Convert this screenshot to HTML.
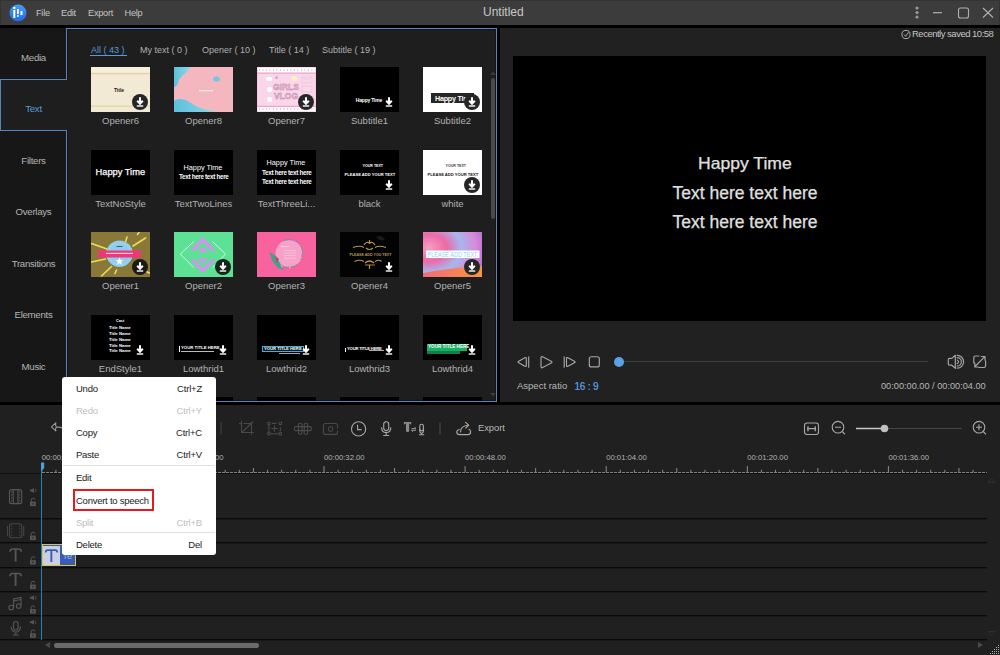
<!DOCTYPE html>
<html><head><meta charset="utf-8">
<style>
*{margin:0;padding:0;box-sizing:border-box}
html,body{width:1000px;height:655px;overflow:hidden;background:#000;font-family:"Liberation Sans",sans-serif}
.a{position:absolute}
.t{position:absolute;white-space:nowrap;line-height:1}
#title{left:0;top:0;width:1000px;height:25px;background:#3c3c3c;border-top:1px solid #333;border-left:1px solid #333;border-right:1px solid #333}
#side{left:0;top:28px;width:67px;height:374px;background:#171717}
#panel{left:66px;top:28px;width:431px;height:374px;background:#1e1e1e;border:1px solid #5088bd;box-shadow:inset 0 0 0 1px #1a1212}
#tabText{left:0;top:79px;width:67px;height:52px;background:#1e1e1e;border:1px solid #5088bd;border-right:none}
#right{left:500px;top:28px;width:500px;height:374px;background:#212121}
#video{left:513px;top:56px;width:473px;height:265px;background:#000}
#tl{left:0;top:405px;width:1000px;height:250px;background:#202020}
.sl{color:#b4b4b4;font-size:9.7px;letter-spacing:-0.3px;width:67px;text-align:center;left:0}
.lab{color:#b2b2b2;font-size:9.5px;text-align:center;width:80px}
.th{position:absolute;width:59px;height:45px;overflow:hidden;background:#000}
.dl{position:absolute;width:16px;height:16px;border-radius:50%;background:#2a2a2a}
.mi{left:76px;font-size:9.5px;color:#1a1a1a;letter-spacing:-0.25px}
.ms{right:798px;font-size:9.5px;color:#1a1a1a;letter-spacing:-0.2px}
.sep{position:absolute;left:0;width:987px;height:2px;background:linear-gradient(#0a0a0a 50%,#171717 50%)}
</style></head><body>
<!-- title bar -->
<div id="title" class="a"></div>
<svg class="a" style="left:9px;top:4px" width="18" height="18" viewBox="0 0 18 18">
<defs><linearGradient id="lg" x1="0" y1="0" x2="0" y2="1"><stop offset="0" stop-color="#4a9df5"/><stop offset="1" stop-color="#1f6be6"/></linearGradient></defs>
<circle cx="9" cy="9" r="8.5" fill="url(#lg)"/>
<rect x="4.3" y="3" width="2" height="2" fill="#fff"/>
<rect x="4.3" y="6" width="2" height="8" fill="#fff"/>
<rect x="8" y="5" width="1.8" height="5" fill="#fff"/>
<rect x="8" y="11" width="1.8" height="1.8" fill="#fff"/>
<rect x="11.5" y="7" width="2" height="4" fill="#fff"/>
</svg>
<div class="t" style="left:36px;top:9px;font-size:9.2px;color:#c4c4c4;letter-spacing:-0.25px">File</div>
<div class="t" style="left:61px;top:9px;font-size:9.2px;color:#c4c4c4;letter-spacing:-0.25px">Edit</div>
<div class="t" style="left:88px;top:9px;font-size:9.2px;color:#c4c4c4;letter-spacing:-0.25px">Export</div>
<div class="t" style="left:124.5px;top:9px;font-size:9.2px;color:#c4c4c4;letter-spacing:-0.25px">Help</div>
<div class="t" style="left:483px;top:6px;font-size:12px;color:#c8c8c8">Untitled</div>
<svg class="a" style="left:905px;top:0" width="95" height="25">
<circle cx="12" cy="8" r="1.6" fill="#9a9a9a"/><circle cx="12" cy="12.5" r="1.6" fill="#9a9a9a"/><circle cx="12" cy="17" r="1.6" fill="#9a9a9a"/>
<line x1="28" y1="12.7" x2="37" y2="12.7" stroke="#b0b0b0" stroke-width="1.2"/>
<rect x="53.5" y="8" width="10" height="10" rx="2" fill="none" stroke="#b0b0b0" stroke-width="1.1"/>
<path d="M78 8 L88 17.5 M88 8 L78 17.5" stroke="#b0b0b0" stroke-width="1.1"/>
</svg>

<!-- left area -->
<div id="side" class="a"></div>
<div id="panel" class="a"></div>
<div id="tabText" class="a"></div>
<div class="a" style="left:67px;top:80px;width:1px;height:50px;background:#1e1e1e"></div>
<div class="t sl" style="top:53px">Media</div>
<div class="t sl" style="top:104px;color:#5a9ad8">Text</div>
<div class="t sl" style="top:156px">Filters</div>
<div class="t sl" style="top:207px">Overlays</div>
<div class="t sl" style="top:259px">Transitions</div>
<div class="t sl" style="top:310px">Elements</div>
<div class="t sl" style="top:362px">Music</div>

<!-- category tabs -->
<div class="t" style="left:91px;top:46px;font-size:9px;color:#5a9ad8">All ( 43 )</div>
<div class="a" style="left:90px;top:55px;width:37px;height:1px;background:#5a9ad8"></div>
<div class="t" style="left:140px;top:46px;font-size:9px;color:#b0b0b0">My text ( 0 )</div>
<div class="t" style="left:202px;top:46px;font-size:9px;color:#b0b0b0">Opener ( 10 )</div>
<div class="t" style="left:269px;top:46px;font-size:9px;color:#b0b0b0">Title ( 14 )</div>
<div class="t" style="left:322px;top:46px;font-size:9px;color:#b0b0b0">Subtitle ( 19 )</div>

<!-- scrollbar -->
<div class="a" style="left:491px;top:78px;width:4px;height:141px;background:#4a4a4a;border-radius:2px"></div>

<div class="th" style="left:91px;top:67px;background:#f3ead6"><svg width="59" height="45" viewBox="0 0 59 45" style="position:absolute;left:0;top:0"><rect width="59" height="45" fill="#f3ead6"/><rect y="6" width="59" height="1.3" fill="#e4d3a4"/><rect y="38.5" width="59" height="1.3" fill="#e4d3a4"/><rect y="0" width="59" height="5" fill="#f6efdc"/><text x="28" y="25" font-size="5" font-weight="bold" fill="#222" text-anchor="middle" style="font-family:'Liberation Sans',sans-serif;">Title</text></svg></div>
<svg class="a" style="left:131.3px;top:92.5px" width="18" height="18" viewBox="0 0 18 18"><circle cx="9" cy="9" r="8" fill="#262626"/><path d="M9 4.3 V10.5 M6.2 7.8 L9 10.8 L11.8 7.8" stroke="#fff" stroke-width="2" fill="none"/><rect x="5.8" y="12.3" width="6.4" height="1.4" fill="#fff"/></svg>
<div class="t lab" style="left:80.5px;top:116px">Opener6</div>
<div class="th" style="left:174px;top:67px;background:#f4b7c0"><svg width="59" height="45" viewBox="0 0 59 45" style="position:absolute;left:0;top:0"><rect width="59" height="45" fill="#f4b7c0"/><defs><linearGradient id="cy8" x1="0" y1="0" x2="1" y2="0"><stop offset="0" stop-color="#5cc0da"/><stop offset="1" stop-color="#8fd8ea"/></linearGradient></defs><path d="M0 0 H16.3 C15 3 12 6 8 9 C5 11.5 4.5 14 4 16.5 C3.5 18.5 1.5 19.7 0 20.2 Z" fill="url(#cy8)"/><path d="M0 45 V33.7 C3 32 7 31.5 10 32.5 C14 33.5 17 36 20 38 C24 40.5 29 42 34 43 C38 44 41 44.5 43 45 Z" fill="url(#cy8)"/><ellipse cx="42.5" cy="12" rx="3.4" ry="2.6" fill="#6ccbe0"/><rect x="25" y="23.2" width="14" height="1.1" fill="#fff" opacity="0.75"/></svg></div>
<div class="t lab" style="left:163.5px;top:116px">Opener8</div>
<div class="th" style="left:257px;top:67px;background:#f9d6ea"><svg width="59" height="45" viewBox="0 0 59 45" style="position:absolute;left:0;top:0"><rect width="59" height="45" fill="#fff"/><rect x="0" y="6" width="59" height="33.5" fill="#f9d6ea"/><rect x="0" y="5.5" width="59" height="1.2" fill="#eaa2c8"/><rect x="0" y="38.8" width="59" height="1.2" fill="#eaa2c8"/><rect x="0" y="0" width="59" height="45" fill="none" stroke="#f0b8d6" stroke-width="1"/><rect x="2.0" y="2" width="0.8" height="2" fill="#e8b0d0"/><rect x="2.0" y="41" width="0.8" height="2" fill="#e8b0d0"/><rect x="5.5" y="2" width="0.8" height="2" fill="#e8b0d0"/><rect x="5.5" y="41" width="0.8" height="2" fill="#e8b0d0"/><rect x="9.0" y="2" width="0.8" height="2" fill="#e8b0d0"/><rect x="9.0" y="41" width="0.8" height="2" fill="#e8b0d0"/><rect x="12.5" y="2" width="0.8" height="2" fill="#e8b0d0"/><rect x="12.5" y="41" width="0.8" height="2" fill="#e8b0d0"/><rect x="16.0" y="2" width="0.8" height="2" fill="#e8b0d0"/><rect x="16.0" y="41" width="0.8" height="2" fill="#e8b0d0"/><rect x="19.5" y="2" width="0.8" height="2" fill="#e8b0d0"/><rect x="19.5" y="41" width="0.8" height="2" fill="#e8b0d0"/><rect x="23.0" y="2" width="0.8" height="2" fill="#e8b0d0"/><rect x="23.0" y="41" width="0.8" height="2" fill="#e8b0d0"/><rect x="26.5" y="2" width="0.8" height="2" fill="#e8b0d0"/><rect x="26.5" y="41" width="0.8" height="2" fill="#e8b0d0"/><rect x="30.0" y="2" width="0.8" height="2" fill="#e8b0d0"/><rect x="30.0" y="41" width="0.8" height="2" fill="#e8b0d0"/><rect x="33.5" y="2" width="0.8" height="2" fill="#e8b0d0"/><rect x="33.5" y="41" width="0.8" height="2" fill="#e8b0d0"/><rect x="37.0" y="2" width="0.8" height="2" fill="#e8b0d0"/><rect x="37.0" y="41" width="0.8" height="2" fill="#e8b0d0"/><rect x="40.5" y="2" width="0.8" height="2" fill="#e8b0d0"/><rect x="40.5" y="41" width="0.8" height="2" fill="#e8b0d0"/><rect x="44.0" y="2" width="0.8" height="2" fill="#e8b0d0"/><rect x="44.0" y="41" width="0.8" height="2" fill="#e8b0d0"/><rect x="47.5" y="2" width="0.8" height="2" fill="#e8b0d0"/><rect x="47.5" y="41" width="0.8" height="2" fill="#e8b0d0"/><rect x="51.0" y="2" width="0.8" height="2" fill="#e8b0d0"/><rect x="51.0" y="41" width="0.8" height="2" fill="#e8b0d0"/><rect x="54.5" y="2" width="0.8" height="2" fill="#e8b0d0"/><rect x="54.5" y="41" width="0.8" height="2" fill="#e8b0d0"/><text x="29" y="22.5" font-size="8.5" font-weight="bold" fill="#f2b8d6" stroke="#b88aa4" stroke-width="0.4" text-anchor="middle" style="font-family:'Liberation Sans',sans-serif;">GIRLS</text><text x="29" y="31.5" font-size="8.5" font-weight="bold" fill="#f2b8d6" stroke="#b88aa4" stroke-width="0.4" text-anchor="middle" style="font-family:'Liberation Sans',sans-serif;">VLOG</text><ellipse cx="12" cy="12" rx="3.2" ry="2" fill="#fff"/><circle cx="12.5" cy="22.5" r="2.6" fill="#fff"/><circle cx="12.5" cy="32.5" r="2.6" fill="#fff"/><rect x="34.5" y="9.5" width="5.5" height="4.5" rx="1" fill="#fbf2c0"/><path d="M45 10 H55 V16 H45Z M45 10 L50 13 L55 10 M45 19 H55 V25 H45Z" fill="none" stroke="#eebcd8" stroke-width="0.6"/><circle cx="19.5" cy="10.5" r="1.5" fill="#e4a0c4"/></svg></div>
<svg class="a" style="left:297.3px;top:92.5px" width="18" height="18" viewBox="0 0 18 18"><circle cx="9" cy="9" r="8" fill="#262626"/><path d="M9 4.3 V10.5 M6.2 7.8 L9 10.8 L11.8 7.8" stroke="#fff" stroke-width="2" fill="none"/><rect x="5.8" y="12.3" width="6.4" height="1.4" fill="#fff"/></svg>
<div class="t lab" style="left:246.5px;top:116px">Opener7</div>
<div class="th" style="left:340px;top:67px;background:#000"><div class="t" style="left:15.8px;top:30.8px;font-size:5px;color:#fff;font-weight:bold;letter-spacing:-0.2px">Happy Time</div></div>
<svg class="a" style="left:380.3px;top:92.5px" width="18" height="18" viewBox="0 0 18 18"><path d="M9 4.3 V10.5 M6.2 7.8 L9 10.8 L11.8 7.8" stroke="#fff" stroke-width="2" fill="none"/><rect x="5.8" y="12.3" width="6.4" height="1.4" fill="#fff"/></svg>
<div class="t lab" style="left:329.5px;top:116px">Subtitle1</div>
<div class="th" style="left:423px;top:67px;background:#fff"><div class="a" style="left:7.8px;top:26px;width:43.5px;height:10px;background:#262626"></div><div class="t" style="left:12px;top:28.3px;font-size:7.2px;color:#fff;font-weight:bold;letter-spacing:-0.25px">Happy Tim</div></div>
<svg class="a" style="left:463.3px;top:92.5px" width="18" height="18" viewBox="0 0 18 18"><circle cx="9" cy="9" r="8" fill="#262626"/><path d="M9 4.3 V10.5 M6.2 7.8 L9 10.8 L11.8 7.8" stroke="#fff" stroke-width="2" fill="none"/><rect x="5.8" y="12.3" width="6.4" height="1.4" fill="#fff"/></svg>
<div class="t lab" style="left:412.5px;top:116px">Subtitle2</div>
<div class="th" style="left:91px;top:150px;background:#000"><div class="t" style="left:4.5px;top:17.5px;font-size:9.3px;color:#fff;-webkit-text-stroke:0.25px #fff">Happy Time</div></div>
<div class="t lab" style="left:80.5px;top:199px">TextNoStyle</div>
<div class="th" style="left:174px;top:150px;background:#000"><div class="t" style="left:9.5px;top:13.8px;font-size:7.3px;color:#fff;">Happy Time</div><div class="t" style="left:5px;top:24px;font-size:6.3px;color:#fff;font-weight:bold;letter-spacing:-0.32px">Text here text here</div></div>
<div class="t lab" style="left:163.5px;top:199px">TextTwoLines</div>
<div class="th" style="left:257px;top:150px;background:#000"><div class="t" style="left:9.5px;top:9px;font-size:7.3px;color:#fff;">Happy Time</div><div class="t" style="left:5px;top:20.3px;font-size:6.3px;color:#fff;font-weight:bold;letter-spacing:-0.32px">Text here text here</div><div class="t" style="left:5px;top:28.5px;font-size:6.3px;color:#fff;font-weight:bold;letter-spacing:-0.32px">Text here text here</div></div>
<div class="t lab" style="left:246.5px;top:199px">TextThreeLi...</div>
<div class="th" style="left:340px;top:150px;background:#000"><div class="t" style="left:22.5px;top:15px;font-size:3.6px;color:#fff;font-weight:bold">YOUR TEXT</div><div class="t" style="left:4.5px;top:22.5px;font-size:4.1px;color:#fff;font-weight:bold">PLEASE ADD YOUR TEXT</div></div>
<svg class="a" style="left:380.3px;top:175.5px" width="18" height="18" viewBox="0 0 18 18"><path d="M9 4.3 V10.5 M6.2 7.8 L9 10.8 L11.8 7.8" stroke="#fff" stroke-width="2" fill="none"/><rect x="5.8" y="12.3" width="6.4" height="1.4" fill="#fff"/></svg>
<div class="t lab" style="left:329.5px;top:199px">black</div>
<div class="th" style="left:423px;top:150px;background:#fff"><div class="t" style="left:22.5px;top:15px;font-size:3.6px;color:#444;font-weight:bold">YOUR TEXT</div><div class="t" style="left:4.5px;top:22.5px;font-size:4.1px;color:#111;font-weight:bold">PLEASE ADD YOUR TEXT</div></div>
<svg class="a" style="left:463.3px;top:175.5px" width="18" height="18" viewBox="0 0 18 18"><circle cx="9" cy="9" r="8" fill="#262626"/><path d="M9 4.3 V10.5 M6.2 7.8 L9 10.8 L11.8 7.8" stroke="#fff" stroke-width="2" fill="none"/><rect x="5.8" y="12.3" width="6.4" height="1.4" fill="#fff"/></svg>
<div class="t lab" style="left:412.5px;top:199px">white</div>
<div class="th" style="left:91px;top:232px;background:#8a7838"><svg width="59" height="45" viewBox="0 0 59 45" style="position:absolute;left:0;top:0"><rect width="59" height="45" fill="#8a7838"/><g stroke="#eedd5a" stroke-width="1.6" stroke-linecap="round"><path d="M0.5 11.5 L16 17 M0.5 30 L14.5 27 M10.5 44 L20.5 34.5 M24 41.5 L25.5 38 M34.5 10 L36 5 M46.5 2.5 L48 0.5 M42 14 L54.5 6 M43.5 34 L58.5 41"/></g><circle cx="28.5" cy="21.7" r="13.3" fill="#8fcdeb"/><circle cx="28.5" cy="21.7" r="11" fill="none" stroke="#e8f6fc" stroke-width="0.5" stroke-dasharray="0.8 1"/><path d="M5.5 18.5 H51.5 L49 22 L51.5 25.5 H5.5 L8 22Z" fill="#f0367a"/><rect x="15" y="20.8" width="27" height="1.2" fill="#ffd0e0"/><path d="M28.5 25.5 L29.6 28.2 L32.5 28.3 L30.2 30 L31 32.8 L28.5 31.2 L26 32.8 L26.8 30 L24.5 28.3 L27.4 28.2Z" fill="#fff"/><rect x="25.5" y="14" width="6" height="1" fill="#557"/></svg></div>
<svg class="a" style="left:131.3px;top:257.5px" width="18" height="18" viewBox="0 0 18 18"><circle cx="9" cy="9" r="8" fill="#1c1a12"/><path d="M9 4.3 V10.5 M6.2 7.8 L9 10.8 L11.8 7.8" stroke="#fff" stroke-width="2" fill="none"/><rect x="5.8" y="12.3" width="6.4" height="1.4" fill="#fff"/></svg>
<div class="t lab" style="left:80.5px;top:281px">Opener1</div>
<div class="th" style="left:174px;top:232px;background:#5de195"><svg width="59" height="45" viewBox="0 0 59 45" style="position:absolute;left:0;top:0"><rect width="59" height="45" fill="#5de195"/><path d="M19.8 9.5 L6.3 22 L19.8 35.7 M38.5 9.5 L51.5 22 L38.5 35.7" fill="none" stroke="#e8fbf0" stroke-width="0.8"/><path d="M28.8 4.5 L42 18.8 H36.8 L28.8 10.2 L20.8 18.8 H15.6Z" fill="#c99ae8"/><path d="M28.8 14 L34 20.2 H23.6Z" fill="#c99ae8"/><path d="M23.6 26.2 H34 L28.8 32.4Z" fill="#c99ae8"/><path d="M15.6 27.5 H20.8 L28.8 36 L36.8 27.5 H42 L28.8 41.5Z" fill="#c99ae8"/></svg></div>
<svg class="a" style="left:214.3px;top:257.5px" width="18" height="18" viewBox="0 0 18 18"><circle cx="9" cy="9" r="8" fill="#14251b"/><path d="M9 4.3 V10.5 M6.2 7.8 L9 10.8 L11.8 7.8" stroke="#fff" stroke-width="2" fill="none"/><rect x="5.8" y="12.3" width="6.4" height="1.4" fill="#fff"/></svg>
<div class="t lab" style="left:163.5px;top:281px">Opener2</div>
<div class="th" style="left:257px;top:232px;background:#f8629e"><svg width="59" height="45" viewBox="0 0 59 45" style="position:absolute;left:0;top:0"><rect width="59" height="45" fill="#f8629e"/><circle cx="32" cy="21.5" r="13.5" fill="#f7a2c8"/><path d="M27 8.5 Q36 6 42 11 M44 14 Q47 20 44 28 M40 33 Q34 36 27 35" fill="none" stroke="#4aa28c" stroke-width="1.2" stroke-dasharray="1.5 1"/><circle cx="38" cy="9" r="1" fill="#f5f"/><circle cx="45" cy="24" r="1" fill="#e6c"/><circle cx="33" cy="35.5" r="1" fill="#f9c"/><path d="M12 20 L19 24 L24 33 L27 38 L21 36 L16 30 Z" fill="#3ea58a"/><path d="M18 24 L22 27 L20 31Z" fill="#d83a6c"/><path d="M23 28 L26 36 L24 35Z" fill="#c7a0e0"/><rect x="24" y="14" width="8" height="0.8" fill="#fde" opacity="0.8"/><rect x="27" y="18.0" width="12" height="0.7" fill="#fde" opacity="0.7"/><rect x="27" y="20.6" width="12" height="0.7" fill="#fde" opacity="0.7"/><rect x="27" y="23.2" width="12" height="0.7" fill="#fde" opacity="0.7"/><rect x="27" y="25.8" width="12" height="0.7" fill="#fde" opacity="0.7"/></svg></div>
<div class="t lab" style="left:246.5px;top:281px">Opener3</div>
<div class="th" style="left:340px;top:232px;background:#030303"><svg width="59" height="45" viewBox="0 0 59 45" style="position:absolute;left:0;top:0"><rect width="59" height="45" fill="#030303"/><path d="M36 5 Q42 2 45 8 Q40 10 36 5Z" fill="#1a1a1a"/><g fill="none" stroke="#b8944c" stroke-width="1.2"><path d="M13 15.5 Q20 13 24 15.5 M35 15.5 Q39 13 46 15.5 M24 13 Q26.5 9 29.5 11 Q32.5 9 35 13 M26 16 Q29.5 19 33 16 M29.5 8 V12"/><path d="M14.5 29.5 Q20 27 24 29.5 M35 29.5 Q39 27 41.5 29.5 M25 31 Q29.5 27 34 31 M29.5 33 V37"/></g><text x="30.5" y="24" font-size="3.6" font-weight="bold" fill="#b99550" text-anchor="middle" style="font-family:'Liberation Sans',sans-serif;">PLEASE ADD YOU TEXT</text><rect x="25" y="32.5" width="10" height="1" fill="#a88645"/></svg></div>
<svg class="a" style="left:380.3px;top:257.5px" width="18" height="18" viewBox="0 0 18 18"><path d="M9 4.3 V10.5 M6.2 7.8 L9 10.8 L11.8 7.8" stroke="#fff" stroke-width="2" fill="none"/><rect x="5.8" y="12.3" width="6.4" height="1.4" fill="#fff"/></svg>
<div class="t lab" style="left:329.5px;top:281px">Opener4</div>
<div class="th" style="left:423px;top:232px;background:#e88ac8"><svg width="59" height="45" viewBox="0 0 59 45" style="position:absolute;left:0;top:0"><defs><radialGradient id="g5" cx="0.1" cy="0.35" r="1"><stop offset="0" stop-color="#f5a0c0"/><stop offset="0.3" stop-color="#ec6aa6"/><stop offset="0.55" stop-color="#a8b6ee"/><stop offset="0.8" stop-color="#d88ad6"/><stop offset="1" stop-color="#b06ad8"/></radialGradient><linearGradient id="g5b" x1="0" y1="0" x2="1" y2="0"><stop offset="0" stop-color="#f06a7a"/><stop offset="1" stop-color="#f8963c"/></linearGradient></defs><rect width="59" height="45" fill="url(#g5)"/><path d="M0 41 Q25 36 59 34 V45 H0Z" fill="url(#g5b)"/><rect x="3" y="18.5" width="53.5" height="7.5" fill="#fff"/><text x="4.5" y="25" font-size="6.8" fill="#8fd6f2" style="font-family:'Liberation Sans',sans-serif;" textLength="50" lengthAdjust="spacingAndGlyphs">PLEASE ADD TEXT</text></svg></div>
<svg class="a" style="left:463.3px;top:257.5px" width="18" height="18" viewBox="0 0 18 18"><circle cx="9" cy="9" r="8" fill="#262626"/><path d="M9 4.3 V10.5 M6.2 7.8 L9 10.8 L11.8 7.8" stroke="#fff" stroke-width="2" fill="none"/><rect x="5.8" y="12.3" width="6.4" height="1.4" fill="#fff"/></svg>
<div class="t lab" style="left:412.5px;top:281px">Opener5</div>
<div class="th" style="left:91px;top:315px;background:#000"><div class="t" style="left:25px;top:5px;font-size:3.8px;color:#fff;font-weight:bold">Cast</div><div class="t" style="left:18px;top:11.0px;font-size:4.4px;color:#fff;font-weight:bold;letter-spacing:-0.05px">Title <b>Name</b></div><div class="t" style="left:18px;top:16.85px;font-size:4.4px;color:#fff;font-weight:bold;letter-spacing:-0.05px">Title <b>Name</b></div><div class="t" style="left:18px;top:22.7px;font-size:4.4px;color:#fff;font-weight:bold;letter-spacing:-0.05px">Title <b>Name</b></div><div class="t" style="left:18px;top:28.549999999999997px;font-size:4.4px;color:#fff;font-weight:bold;letter-spacing:-0.05px">Title <b>Name</b></div><div class="t" style="left:18px;top:34.4px;font-size:4.4px;color:#fff;font-weight:bold;letter-spacing:-0.05px">Title <b>Name</b></div></div>
<svg class="a" style="left:131.3px;top:340.5px" width="18" height="18" viewBox="0 0 18 18"><path d="M9 4.3 V10.5 M6.2 7.8 L9 10.8 L11.8 7.8" stroke="#fff" stroke-width="2" fill="none"/><rect x="5.8" y="12.3" width="6.4" height="1.4" fill="#fff"/></svg>
<div class="t lab" style="left:80.5px;top:364px">EndStyle1</div>
<div class="th" style="left:174px;top:315px;background:#000"><div class="a" style="left:5px;top:31px;width:0.8px;height:6px;background:#fff"></div><div class="t" style="left:7px;top:30.8px;font-size:4.3px;color:#fff;font-weight:bold">YOUR TITLE HERE</div><div class="a" style="left:7px;top:35.8px;width:33px;height:1px;background:#bbb"></div></div>
<svg class="a" style="left:214.3px;top:340.5px" width="18" height="18" viewBox="0 0 18 18"><path d="M9 4.3 V10.5 M6.2 7.8 L9 10.8 L11.8 7.8" stroke="#fff" stroke-width="2" fill="none"/><rect x="5.8" y="12.3" width="6.4" height="1.4" fill="#fff"/></svg>
<div class="t lab" style="left:163.5px;top:364px">Lowthrid1</div>
<div class="th" style="left:257px;top:315px;background:#000"><div class="a" style="left:5px;top:30.5px;width:42px;height:6.5px;border:0.8px solid #38b4e0;background:#101418"></div><div class="t" style="left:7px;top:31.5px;font-size:4.2px;color:#fff;font-weight:bold">YOUR TITLE HERE</div><div class="a" style="left:22px;top:38.3px;width:21px;height:1px;background:#9ab"></div></div>
<svg class="a" style="left:297.3px;top:340.5px" width="18" height="18" viewBox="0 0 18 18"><path d="M9 4.3 V10.5 M6.2 7.8 L9 10.8 L11.8 7.8" stroke="#fff" stroke-width="2" fill="none"/><rect x="5.8" y="12.3" width="6.4" height="1.4" fill="#fff"/></svg>
<div class="t lab" style="left:246.5px;top:364px">Lowthrid2</div>
<div class="th" style="left:340px;top:315px;background:#000"><div class="a" style="left:5px;top:32.5px;width:1px;height:4px;background:#fff"></div><div class="t" style="left:7px;top:32.3px;font-size:4.2px;color:#fff;font-weight:bold;letter-spacing:-0.2px">YOUR TITLE HERE</div><div class="a" style="left:29px;top:34.8px;width:15px;height:1px;background:#aaa"></div></div>
<svg class="a" style="left:380.3px;top:340.5px" width="18" height="18" viewBox="0 0 18 18"><path d="M9 4.3 V10.5 M6.2 7.8 L9 10.8 L11.8 7.8" stroke="#fff" stroke-width="2" fill="none"/><rect x="5.8" y="12.3" width="6.4" height="1.4" fill="#fff"/></svg>
<div class="t lab" style="left:329.5px;top:364px">Lowthrid3</div>
<div class="th" style="left:423px;top:315px;background:#000"><div class="a" style="left:3.5px;top:28.5px;width:40px;height:7px;background:#19b064"></div><div class="t" style="left:5px;top:29.6px;font-size:4.6px;color:#fff;font-weight:bold">YOUR TITLE HERE</div><div class="a" style="left:3.5px;top:35.5px;width:33px;height:3px;background:#0f8048"></div></div>
<svg class="a" style="left:463.3px;top:340.5px" width="18" height="18" viewBox="0 0 18 18"><path d="M9 4.3 V10.5 M6.2 7.8 L9 10.8 L11.8 7.8" stroke="#fff" stroke-width="2" fill="none"/><rect x="5.8" y="12.3" width="6.4" height="1.4" fill="#fff"/></svg>
<div class="t lab" style="left:412.5px;top:364px">Lowthrid4</div>
<div class="th" style="left:91px;top:397px;height:4px;background:#000"></div>
<div class="th" style="left:174px;top:397px;height:4px;background:#000"></div>
<div class="th" style="left:257px;top:397px;height:4px;background:#000"></div>
<div class="th" style="left:340px;top:397px;height:4px;background:#000"></div>
<div class="th" style="left:423px;top:397px;height:4px;background:#000"></div>

<!-- right panel -->
<div id="right" class="a"></div>
<div id="video" class="a"></div>
<svg class="a" style="left:901px;top:29px" width="11" height="11"><circle cx="5" cy="5.5" r="4.1" fill="none" stroke="#bdbdbd" stroke-width="0.9"/><path d="M3 5.6 L4.6 7.3 L7.6 3.2" fill="none" stroke="#bdbdbd" stroke-width="0.9"/></svg>
<div class="t" style="left:912px;top:29px;font-size:9.5px;color:#c4c4c4;letter-spacing:-0.5px">Recently saved 10:58</div>
<div class="t" style="left:698px;top:155px;font-size:16.5px;color:#e0e0e0;-webkit-text-stroke:0.25px #e0e0e0;transform:scaleX(1.065);transform-origin:0 0">Happy Time</div>
<div class="t" style="left:672.5px;top:184.8px;font-size:17.5px;color:#e0e0e0;-webkit-text-stroke:0.25px #e0e0e0">Text here text here</div>
<div class="t" style="left:672.5px;top:214.3px;font-size:17.5px;color:#e0e0e0;-webkit-text-stroke:0.25px #e0e0e0">Text here text here</div>


<!-- player controls -->
<svg class="a" style="left:510px;top:350px" width="100" height="24" viewBox="510 350 100 24">
<g fill="none" stroke="#a6a6a6" stroke-width="1.15" stroke-linejoin="round" stroke-linecap="round">
<path d="M524.90 357.78 L518.70 361.22 Q517.30 362.00 518.70 362.78 L524.90 366.22 Q526.30 367.00 526.30 365.40 L526.30 358.60 Q526.30 357.00 524.90 357.78 Z"/><line x1="528.7" y1="356.8" x2="528.7" y2="367.2"/>
<path d="M542.59 356.84 L551.21 361.36 Q552.80 362.20 551.21 363.04 L542.59 367.56 Q541.00 368.40 541.00 366.60 L541.00 357.80 Q541.00 356.00 542.59 356.84 Z"/>
<line x1="564.2" y1="356.8" x2="564.2" y2="367.2"/><path d="M567.91 357.76 L574.39 361.24 Q575.80 362.00 574.39 362.76 L567.91 366.24 Q566.50 367.00 566.50 365.40 L566.50 358.60 Q566.50 357.00 567.91 357.76 Z"/>
<rect x="589.3" y="356.7" width="10" height="10.2" rx="2"/>
</g></svg>
<div class="a" style="left:624px;top:361px;width:304px;height:1px;background:#3f3f3f"></div>
<div class="a" style="left:614px;top:357px;width:10px;height:10px;border-radius:50%;background:#5aa2e6"></div>
<svg class="a" style="left:940px;top:350px" width="55" height="25" viewBox="940 350 55 25">
<g fill="none" stroke="#a4a4a4" stroke-width="1.2" stroke-linejoin="round" stroke-linecap="round">
<path d="M955.3 355.3 L951.8 358.4 H949.5 Q948.3 358.4 948.3 359.6 V364 Q948.3 365.2 949.5 365.2 H951.8 L955.3 368.3 Z"/>
<path d="M957.2 360 A1.9 1.9 0 0 1 957.2 363.6 M957.2 357.6 A4.2 4.2 0 0 1 957.2 366 M957.2 355.4 A6.4 6.4 0 0 1 957.2 368.2"/>
<path d="M979 356 H975.5 Q973.8 356 973.8 357.7 V363 M985.6 361 V365.8 Q985.6 367.5 983.9 367.5 H979 M975 366.5 L984.8 356.7 M981.3 356.5 H985 V360.2 M974.8 363 V367 H978.5"/>
</g></svg>
<div class="t" style="left:517px;top:381px;font-size:9.5px;color:#b8b8b8">Aspect ratio</div>
<div class="t" style="left:574.5px;top:382px;font-size:10px;color:#5aa2e6;letter-spacing:-0.2px;-webkit-text-stroke:0.2px #5aa2e6">16 : 9</div>
<div class="t" style="left:881px;top:382px;font-size:9.2px;color:#b8b8b8">00:00:00.00 / 00:00:04.00</div>

<!-- timeline -->
<div id="tl" class="a"></div>

<!-- toolbar -->
<svg class="a" style="left:0;top:405px" width="1000" height="45" viewBox="0 405 1000 45">
<g fill="none" stroke="#9a9a9a" stroke-width="1.1">
<path d="M55.8 422.8 L51.4 426.8 L55.8 430.8 Q55 428.6 56.3 427.3 Q55.2 425 55.8 422.8Z M56.3 427.3 Q59.5 426.6 63 428.3" stroke-linejoin="round"/>
</g>
<line x1="221" y1="422" x2="221" y2="434.5" stroke="#444" stroke-width="1"/>
<g fill="none" stroke="#494949" stroke-width="1.1">
<path d="M241.5 421 V432.5 H253.8 M239 423.5 H242 M243.5 423.5 H251.5 V434.8 M242.5 432 L253 421.5"/>
<path d="M268.9 424.6 V432.5 M270.2 433.7 H279 M280.3 427 V431.5 M272 423.4 H276.5 M274.5 425.2 V431.8 M271.2 428.5 H277.8"/>
<rect x="267.7" y="422.2" width="2.4" height="2.4" rx="0.6"/><rect x="279.1" y="422.2" width="2.4" height="2.4" rx="0.6"/>
<rect x="267.7" y="432.5" width="2.4" height="2.4" rx="0.6"/><rect x="279.1" y="432.5" width="2.4" height="2.4" rx="0.6"/>
<rect x="298.5" y="423.3" width="3.4" height="11" rx="1"/><rect x="304.2" y="423.3" width="3.4" height="11" rx="1"/>
<rect x="294.5" y="426.6" width="16.8" height="4" rx="1"/>
<path d="M337.5 428.5 V425.5 Q337.5 423.5 335.5 423.5 H325.5 Q323.5 423.5 323.5 425.5 V432.4 Q323.5 434.4 325.5 434.4 H335.5 Q337.5 434.4 337.5 432.4 V430.5"/>
<rect x="328.6" y="426.7" width="4" height="4.6" rx="1.2"/>
</g>
<g fill="none" stroke="#a8a8a8" stroke-width="1.1">
<circle cx="358.6" cy="428.9" r="7.1"/>
<path d="M357.6 424.8 V429.6 H361.6"/>
<rect x="383.7" y="421.8" width="5" height="8.8" rx="2.5"/>
<path d="M381.6 427.2 Q381.6 432.6 386.2 432.6 Q390.8 432.6 390.8 427.2 M386.2 432.6 V435.5 M383.2 435.5 H389.2"/>
<path d="M419.6 429 Q419.6 433.3 421.6 433.3 Q423.6 433.3 423.6 429 M421.6 433.3 V434.8 M419 434.8 H424.2"/>
<rect x="419.8" y="424.3" width="3.6" height="6.6" rx="1.8"/>
<path d="M411.5 428.6 H416 M414.5 427.2 L416 428.6 M411.5 430.3 H416 M411.5 430.3 L413 431.7" stroke-width="0.9"/>
</g>
<path d="M403.8 422 H411.3 V424.5 H410.7 Q410 423.4 409.2 423.4 V431 Q409.2 432 407.6 432 Q406 432 406 431 V423.4 Q405 423.4 404.4 424.5 H403.8Z" fill="#8a8a8a"/>
<line x1="440" y1="422.6" x2="440" y2="434.6" stroke="#4a4a4a" stroke-width="1.1"/>
<g fill="none" stroke="#a8a8a8" stroke-width="1.15" stroke-linecap="round" stroke-linejoin="round">
<path d="M459.2 429.5 Q456.8 430 456.8 432.3 Q456.8 434.6 459.5 434.6 H467.8 Q470.6 434.6 470.6 432 Q470.6 430 469 429.3"/>
<path d="M460.5 432 Q460.5 425.8 468.2 425.2"/>
<path d="M465.6 422.4 L468.6 425.2 L465.8 428"/>
</g>
<g fill="none" stroke="#a8a8a8" stroke-width="1.1">
<rect x="804.5" y="423" width="14" height="11.5" rx="2.5"/>
<path d="M808.2 426.2 Q807.3 428.7 808.2 431.2 M815 426.2 Q815.9 428.7 815 431.2 M808 428.7 H815.2" stroke-width="1.3"/>
<circle cx="838" cy="427.2" r="5.8"/>
<path d="M835 427.2 H841 M842.2 431.5 L845 434.4"/>
<circle cx="979" cy="427.2" r="5.8"/>
<path d="M976 427.2 H982 M979 424.2 V430.2 M983.2 431.5 L986 434.4"/>
</g>
<line x1="856" y1="428.5" x2="962" y2="428.5" stroke="#454545" stroke-width="1"/>
<line x1="856" y1="428.5" x2="884.5" y2="428.5" stroke="#c8c8c8" stroke-width="1.5"/>
<circle cx="884.5" cy="428.5" r="3.8" fill="#c0c0c0"/>
</svg>
<div class="t" style="left:478px;top:424px;font-size:9.3px;color:#b8b8b8">Export</div>
<!-- ruler -->
<div class="t" style="left:41.8px;top:454px;font-size:7.7px;color:#b4b4b4">00:00:00.00</div><div class="t" style="left:182.9px;top:454px;font-size:7.7px;color:#b4b4b4">00:00:16.00</div><div class="t" style="left:324.0px;top:454px;font-size:7.7px;color:#b4b4b4">00:00:32.00</div><div class="t" style="left:465.1px;top:454px;font-size:7.7px;color:#b4b4b4">00:00:48.00</div><div class="t" style="left:606.2px;top:454px;font-size:7.7px;color:#b4b4b4">00:01:04.00</div><div class="t" style="left:747.3px;top:454px;font-size:7.7px;color:#b4b4b4">00:01:20.00</div><div class="t" style="left:888.4px;top:454px;font-size:7.7px;color:#b4b4b4">00:01:36.00</div>
<svg class="a" style="left:0;top:440px" width="1000" height="40" viewBox="0 440 1000 40">
<line x1="0" y1="473.5" x2="987" y2="473.5" stroke="#111" stroke-width="1"/>
<line x1="42" y1="472.5" x2="987" y2="472.5" stroke="#808080" stroke-width="1" stroke-dasharray="3 1"/>
<g stroke="#8c8c8c" stroke-width="1"><line x1="41.80" y1="466" x2="41.80" y2="472.5"/><line x1="55.91" y1="469.8" x2="55.91" y2="472.5"/><line x1="70.02" y1="469.8" x2="70.02" y2="472.5"/><line x1="84.13" y1="469.8" x2="84.13" y2="472.5"/><line x1="98.24" y1="469.8" x2="98.24" y2="472.5"/><line x1="112.35" y1="468" x2="112.35" y2="472.5"/><line x1="126.46" y1="469.8" x2="126.46" y2="472.5"/><line x1="140.57" y1="469.8" x2="140.57" y2="472.5"/><line x1="154.68" y1="469.8" x2="154.68" y2="472.5"/><line x1="168.79" y1="469.8" x2="168.79" y2="472.5"/><line x1="182.90" y1="466" x2="182.90" y2="472.5"/><line x1="197.01" y1="469.8" x2="197.01" y2="472.5"/><line x1="211.12" y1="469.8" x2="211.12" y2="472.5"/><line x1="225.23" y1="469.8" x2="225.23" y2="472.5"/><line x1="239.34" y1="469.8" x2="239.34" y2="472.5"/><line x1="253.45" y1="468" x2="253.45" y2="472.5"/><line x1="267.56" y1="469.8" x2="267.56" y2="472.5"/><line x1="281.67" y1="469.8" x2="281.67" y2="472.5"/><line x1="295.78" y1="469.8" x2="295.78" y2="472.5"/><line x1="309.89" y1="469.8" x2="309.89" y2="472.5"/><line x1="324.00" y1="466" x2="324.00" y2="472.5"/><line x1="338.11" y1="469.8" x2="338.11" y2="472.5"/><line x1="352.22" y1="469.8" x2="352.22" y2="472.5"/><line x1="366.33" y1="469.8" x2="366.33" y2="472.5"/><line x1="380.44" y1="469.8" x2="380.44" y2="472.5"/><line x1="394.55" y1="468" x2="394.55" y2="472.5"/><line x1="408.66" y1="469.8" x2="408.66" y2="472.5"/><line x1="422.77" y1="469.8" x2="422.77" y2="472.5"/><line x1="436.88" y1="469.8" x2="436.88" y2="472.5"/><line x1="450.99" y1="469.8" x2="450.99" y2="472.5"/><line x1="465.10" y1="466" x2="465.10" y2="472.5"/><line x1="479.21" y1="469.8" x2="479.21" y2="472.5"/><line x1="493.32" y1="469.8" x2="493.32" y2="472.5"/><line x1="507.43" y1="469.8" x2="507.43" y2="472.5"/><line x1="521.54" y1="469.8" x2="521.54" y2="472.5"/><line x1="535.65" y1="468" x2="535.65" y2="472.5"/><line x1="549.76" y1="469.8" x2="549.76" y2="472.5"/><line x1="563.87" y1="469.8" x2="563.87" y2="472.5"/><line x1="577.98" y1="469.8" x2="577.98" y2="472.5"/><line x1="592.09" y1="469.8" x2="592.09" y2="472.5"/><line x1="606.20" y1="466" x2="606.20" y2="472.5"/><line x1="620.31" y1="469.8" x2="620.31" y2="472.5"/><line x1="634.42" y1="469.8" x2="634.42" y2="472.5"/><line x1="648.53" y1="469.8" x2="648.53" y2="472.5"/><line x1="662.64" y1="469.8" x2="662.64" y2="472.5"/><line x1="676.75" y1="468" x2="676.75" y2="472.5"/><line x1="690.86" y1="469.8" x2="690.86" y2="472.5"/><line x1="704.97" y1="469.8" x2="704.97" y2="472.5"/><line x1="719.08" y1="469.8" x2="719.08" y2="472.5"/><line x1="733.19" y1="469.8" x2="733.19" y2="472.5"/><line x1="747.30" y1="466" x2="747.30" y2="472.5"/><line x1="761.41" y1="469.8" x2="761.41" y2="472.5"/><line x1="775.52" y1="469.8" x2="775.52" y2="472.5"/><line x1="789.63" y1="469.8" x2="789.63" y2="472.5"/><line x1="803.74" y1="469.8" x2="803.74" y2="472.5"/><line x1="817.85" y1="468" x2="817.85" y2="472.5"/><line x1="831.96" y1="469.8" x2="831.96" y2="472.5"/><line x1="846.07" y1="469.8" x2="846.07" y2="472.5"/><line x1="860.18" y1="469.8" x2="860.18" y2="472.5"/><line x1="874.29" y1="469.8" x2="874.29" y2="472.5"/><line x1="888.40" y1="466" x2="888.40" y2="472.5"/><line x1="902.51" y1="469.8" x2="902.51" y2="472.5"/><line x1="916.62" y1="469.8" x2="916.62" y2="472.5"/><line x1="930.73" y1="469.8" x2="930.73" y2="472.5"/><line x1="944.84" y1="469.8" x2="944.84" y2="472.5"/><line x1="958.95" y1="468" x2="958.95" y2="472.5"/><line x1="973.06" y1="469.8" x2="973.06" y2="472.5"/></g>
</svg>

<div class="sep" style="top:518px"></div>
<div class="sep" style="top:542px"></div>
<div class="sep" style="top:567px"></div>
<div class="sep" style="top:591px"></div>
<div class="sep" style="top:615px"></div>
<div class="sep" style="top:639px"></div>
<div class="a" style="left:41px;top:470px;width:1.2px;height:170px;background:#1f86bd"></div>
<svg class="a" style="left:41px;top:462px" width="4" height="10"><path d="M0 0.5 H3.2 V6 L0 9.5Z" fill="#4aa3df"/></svg>


<!-- track headers -->
<svg class="a" style="left:0;top:474px" width="41" height="166" viewBox="0 474 41 166">
<g fill="none" stroke="#575757" stroke-width="1.1">
<rect x="9.5" y="489.6" width="12.2" height="14" rx="2"/>
<path d="M13.2 489.6 V503.6 M18 489.6 V503.6"/>
<g stroke="#444"><rect x="9.5" y="523.7" width="12.2" height="14" rx="2"/>
<path d="M7.5 526 V536 M23.7 526 V536"/></g>
<path d="M15.6 549.3 V561.5" stroke-width="1.9"/>
<path d="M10 551.8 Q10 549 12.5 549 H18.7 Q21.2 549 21.2 551.8" stroke-width="1.6"/>
<path d="M15.6 573.8 V586" stroke-width="1.9"/>
<path d="M10 576.3 Q10 573.5 12.5 573.5 H18.7 Q21.2 573.5 21.2 576.3" stroke-width="1.6"/>
<path d="M13.6 607.5 V599 L21 597.5 V605.5 M13.6 601 L21 599.5"/>
<circle cx="11.2" cy="607.5" r="2.3"/><circle cx="18.7" cy="606" r="2.3"/>
<rect x="13.5" y="621.5" width="4.6" height="8.5" rx="2.3"/>
<path d="M11.2 626.5 Q11.2 632 15.8 632 Q20.4 632 20.4 626.5 M15.8 632 V635 M12.8 635 H18.8"/>
</g>
<g fill="#575757">
<rect x="11" y="491.3" width="1.2" height="1.2"/><rect x="19" y="491.3" width="1.2" height="1.2"/><rect x="11" y="494.3" width="1.2" height="1.2"/><rect x="19" y="494.3" width="1.2" height="1.2"/><rect x="11" y="497.3" width="1.2" height="1.2"/><rect x="19" y="497.3" width="1.2" height="1.2"/><rect x="11" y="500.3" width="1.2" height="1.2"/><rect x="19" y="500.3" width="1.2" height="1.2"/><g fill="#444"><rect x="11" y="525.4" width="1.2" height="1.2"/><rect x="19" y="525.4" width="1.2" height="1.2"/><rect x="11" y="528.4" width="1.2" height="1.2"/><rect x="19" y="528.4" width="1.2" height="1.2"/><rect x="11" y="531.4" width="1.2" height="1.2"/><rect x="19" y="531.4" width="1.2" height="1.2"/><rect x="11" y="534.4" width="1.2" height="1.2"/><rect x="19" y="534.4" width="1.2" height="1.2"/></g>
</g>
<path d="M31.2 501.8 V500.1 Q31.2 498.3 33 498.3 Q34.8 498.3 34.8 499.8" fill="none" stroke="#555" stroke-width="1"/><rect x="30" y="501.6" width="5.8" height="4.5" fill="#555"/><rect x="32.4" y="503.1" width="1.1" height="1.5" fill="#202020"/><path d="M31.2 535.8 V534.0999999999999 Q31.2 532.3 33 532.3 Q34.8 532.3 34.8 533.8" fill="none" stroke="#555" stroke-width="1"/><rect x="30" y="535.5999999999999" width="5.8" height="4.5" fill="#555"/><rect x="32.4" y="537.0999999999999" width="1.1" height="1.5" fill="#202020"/><path d="M31.2 560.3 V558.5999999999999 Q31.2 556.8 33 556.8 Q34.8 556.8 34.8 558.3" fill="none" stroke="#555" stroke-width="1"/><rect x="30" y="560.0999999999999" width="5.8" height="4.5" fill="#555"/><rect x="32.4" y="561.5999999999999" width="1.1" height="1.5" fill="#202020"/><path d="M31.2 584.8 V583.0999999999999 Q31.2 581.3 33 581.3 Q34.8 581.3 34.8 582.8" fill="none" stroke="#555" stroke-width="1"/><rect x="30" y="584.5999999999999" width="5.8" height="4.5" fill="#555"/><rect x="32.4" y="586.0999999999999" width="1.1" height="1.5" fill="#202020"/><path d="M31.2 609.3 V607.5999999999999 Q31.2 605.8 33 605.8 Q34.8 605.8 34.8 607.3" fill="none" stroke="#555" stroke-width="1"/><rect x="30" y="609.0999999999999" width="5.8" height="4.5" fill="#555"/><rect x="32.4" y="610.5999999999999" width="1.1" height="1.5" fill="#202020"/><path d="M31.2 633.5 V631.8 Q31.2 630 33 630 Q34.8 630 34.8 631.5" fill="none" stroke="#555" stroke-width="1"/><rect x="30" y="633.3" width="5.8" height="4.5" fill="#555"/><rect x="32.4" y="634.8" width="1.1" height="1.5" fill="#202020"/><path d="M30 489.5 H31.6 L34 488 V493 L31.6 491.5 H30Z" fill="#555"/><path d="M35.3 488.8 Q36.6 490.5 35.3 492.2" fill="none" stroke="#555" stroke-width="0.9"/><path d="M30 596.8 H31.6 L34 595.3 V600.3 L31.6 598.8 H30Z" fill="#555"/><path d="M35.3 596.0999999999999 Q36.6 597.8 35.3 599.5" fill="none" stroke="#555" stroke-width="0.9"/><path d="M30 621.3 H31.6 L34 619.8 V624.8 L31.6 623.3 H30Z" fill="#555"/><path d="M35.3 620.5999999999999 Q36.6 622.3 35.3 624.0" fill="none" stroke="#555" stroke-width="0.9"/>
</svg>
<!-- clip -->
<div class="a" style="left:41.5px;top:544px;width:34.5px;height:22px;background:#3a5cb4;border:1px solid #d6c44a"></div>
<div class="a" style="left:43px;top:545.5px;width:16.5px;height:19px;background:#c9d0e6"></div>
<svg class="a" style="left:43px;top:546px" width="17" height="19" viewBox="43 546 17 19"><path d="M45.6 552.6 Q45.6 550.1 47.5 550.1 H55.4 Q57.3 550.1 57.3 552.6" fill="none" stroke="#3b5dad" stroke-width="1.6"/><rect x="50.4" y="550" width="1.9" height="12" fill="#3b5dad"/></svg>
<div class="t" style="left:62.3px;top:551px;font-size:9.5px;color:#8fb8f0">Te</div>

<!-- scrollbars -->
<svg class="a" style="left:44px;top:641px" width="8" height="8"><path d="M1 4 L6 1 V7Z" fill="#4a4a4a"/></svg>
<div class="a" style="left:53.5px;top:643.3px;width:205px;height:4.6px;border-radius:2.3px;background:#6c6c6c"></div>
<svg class="a" style="left:976px;top:641px" width="8" height="8"><path d="M7 4 L2 1 V7Z" fill="#4a4a4a"/></svg>
<svg class="a" style="left:987px;top:476px" width="9" height="8"><path d="M1 6.5 L4.5 2.5 L8 6.5Z" fill="none" stroke="#303030" stroke-width="0.9"/></svg>
<svg class="a" style="left:987px;top:630px" width="9" height="8"><path d="M1 1.5 L4.5 5.5 L8 1.5Z" fill="none" stroke="#303030" stroke-width="0.9"/></svg>
<svg class="a" style="left:989px;top:644px" width="11" height="11"><rect x="9" y="9" width="1" height="1" fill="#aaa"/><rect x="9" y="7" width="1" height="1" fill="#aaa"/><rect x="9" y="5" width="1" height="1" fill="#aaa"/><rect x="9" y="3" width="1" height="1" fill="#aaa"/><rect x="9" y="1" width="1" height="1" fill="#aaa"/><rect x="7" y="9" width="1" height="1" fill="#aaa"/><rect x="7" y="7" width="1" height="1" fill="#aaa"/><rect x="7" y="5" width="1" height="1" fill="#aaa"/><rect x="7" y="3" width="1" height="1" fill="#aaa"/><rect x="5" y="9" width="1" height="1" fill="#aaa"/><rect x="5" y="7" width="1" height="1" fill="#aaa"/><rect x="5" y="5" width="1" height="1" fill="#aaa"/><rect x="3" y="9" width="1" height="1" fill="#aaa"/><rect x="3" y="7" width="1" height="1" fill="#aaa"/><rect x="1" y="9" width="1" height="1" fill="#aaa"/></svg>
<svg class="a" style="left:489px;top:70px" width="8" height="6"><path d="M1 5 L4 1.5 L7 5Z" fill="#3a3a3a"/></svg>
<svg class="a" style="left:489px;top:392px" width="8" height="6"><path d="M1 1 L4 4.5 L7 1Z" fill="#3a3a3a"/></svg>

<!-- context menu -->
<div class="a" style="left:62px;top:377px;width:154px;height:178px;background:#fff;border-radius:3px"></div>
<div class="t mi" style="top:384px">Undo</div><div class="t ms" style="top:384px">Ctrl+Z</div>
<div class="t mi" style="top:406px;color:#c0c0c0">Redo</div><div class="t ms" style="top:406px;color:#c0c0c0">Ctrl+Y</div>
<div class="t mi" style="top:428px">Copy</div><div class="t ms" style="top:428px">Ctrl+C</div>
<div class="t mi" style="top:450px">Paste</div><div class="t ms" style="top:450px">Ctrl+V</div>
<div class="a" style="left:63px;top:465px;width:152px;height:1px;background:#e0e0e0"></div>
<div class="t mi" style="top:473px">Edit</div>
<div class="t mi" style="top:496px">Convert to speech</div>
<div class="a" style="left:73px;top:489px;width:81px;height:22px;border:2px solid #e8181c"></div>
<div class="t mi" style="top:518px;color:#c0c0c0">Split</div><div class="t ms" style="top:518px;color:#c0c0c0">Ctrl+B</div>
<div class="a" style="left:63px;top:532px;width:152px;height:1px;background:#e0e0e0"></div>
<div class="t mi" style="top:540px">Delete</div><div class="t ms" style="top:540px">Del</div>

</body></html>
